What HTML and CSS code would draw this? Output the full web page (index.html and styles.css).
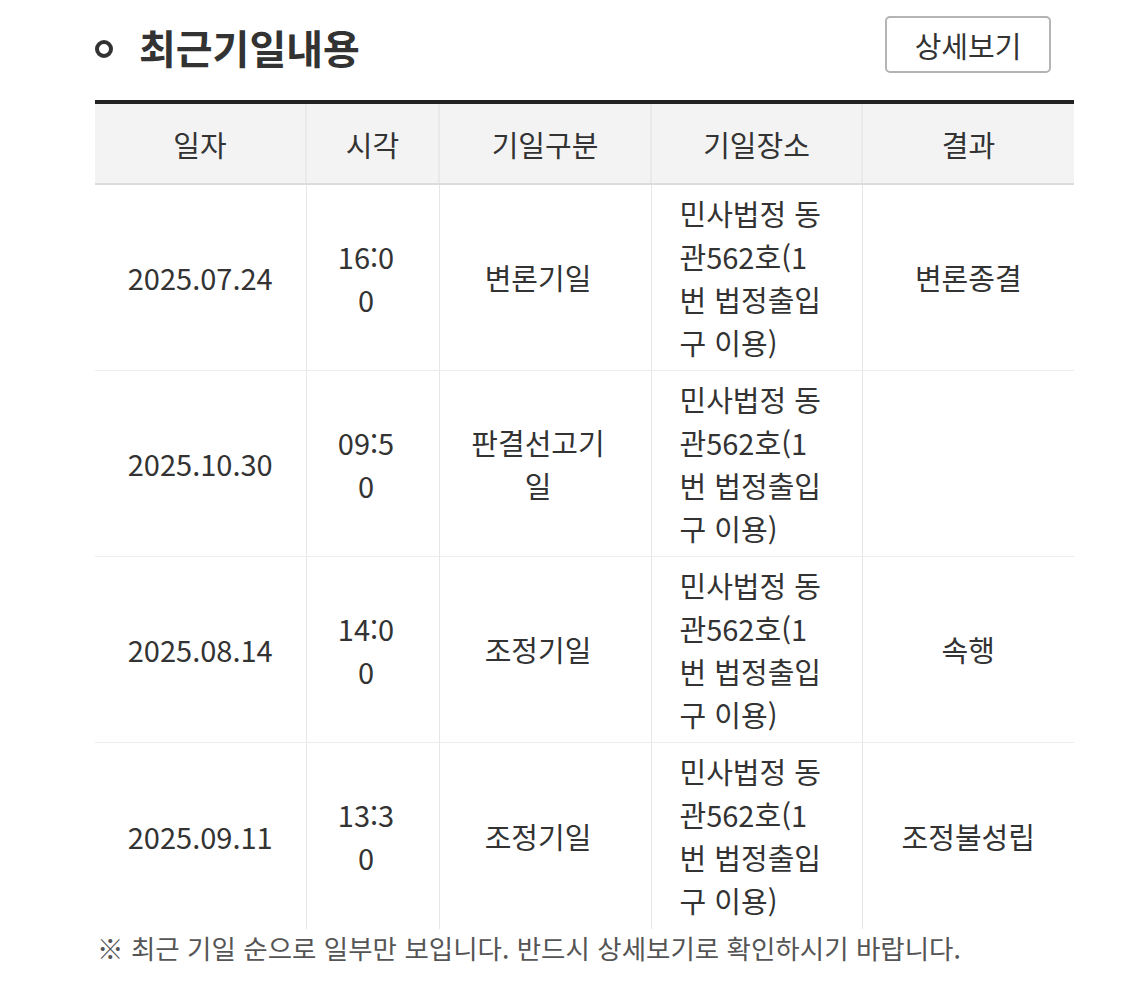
FILE: index.html
```html
<!DOCTYPE html>
<html lang="ko">
<head>
<meta charset="utf-8">
<link rel="stylesheet" href="styles.css">
</head>
<body>
<div class="page">
  <div class="head">
    <h2 class="title"><span class="bullet"></span>최근기일내용</h2>
    <button class="more">상세보기</button>
  </div>
  <table class="dates">
    <colgroup>
      <col class="w1"><col class="w2"><col class="w3"><col class="w4"><col class="w5">
    </colgroup>
    <thead>
      <tr><th>일자</th><th>시각</th><th>기일구분</th><th>기일장소</th><th>결과</th></tr>
    </thead>
    <tbody>
      <tr>
        <td>2025.07.24</td><td class="c2">16:00</td><td class="c3">변론기일</td>
        <td class="c4">민사법정 동관562호(1번 법정출입구 이용)</td><td>변론종결</td>
      </tr>
      <tr>
        <td>2025.10.30</td><td class="c2">09:50</td><td class="c3">판결선고기일</td>
        <td class="c4">민사법정 동관562호(1번 법정출입구 이용)</td><td></td>
      </tr>
      <tr>
        <td>2025.08.14</td><td class="c2">14:00</td><td class="c3">조정기일</td>
        <td class="c4">민사법정 동관562호(1번 법정출입구 이용)</td><td>속행</td>
      </tr>
      <tr>
        <td>2025.09.11</td><td class="c2">13:30</td><td class="c3">조정기일</td>
        <td class="c4">민사법정 동관562호(1번 법정출입구 이용)</td><td>조정불성립</td>
      </tr>
    </tbody>
  </table>
  <p class="note">※ 최근 기일 순으로 일부만 보입니다. 반드시 상세보기로 확인하시기 바랍니다.</p>
</div>
</body>
</html>
```

FILE: styles.css
```css
html, body {
  margin: 0;
  padding: 0;
  background: #fff;
}
body {
  font-family: "Noto Sans CJK KR", "Noto Sans", sans-serif;
  color: #333;
}
.page {
  width: 979px;
  padding-left: 95px;
}
.head {
  height: 100px;
  display: flex;
  align-items: center;
  justify-content: space-between;
  padding-bottom: 6px;
  box-sizing: border-box;
  padding-right: 23px;
}
.title {
  margin: 0;
  display: flex;
  align-items: center;
  font-size: 40px;
  font-weight: 700;
  line-height: 1.3;
  color: #333;
}
.bullet {
  flex: 0 0 auto;
  width: 18px;
  height: 18px;
  border: 4.5px solid #333;
  border-radius: 50%;
  box-sizing: border-box;
  margin: 4px 26px 0 0;
}
.more {
  width: 166px;
  height: 57px;
  border: 2px solid #b4b4b4;
  border-radius: 5px;
  background: #fff;
  font-family: inherit;
  font-size: 29px;
  color: #333;
  padding: 0;
  margin-top: -5px;
}
.dates {
  width: 979px;
  border-collapse: collapse;
  table-layout: fixed;
  border-top: 4px solid #222;
}
.w1 { width: 211px; }
.w2 { width: 133px; }
.w3 { width: 212px; }
.w4 { width: 211px; }
.w5 { width: 212px; }
.dates th {
  height: 79px;
  background: #f3f3f3;
  font-weight: 400;
  font-size: 29px;
  color: #333;
  border-bottom: 2px solid #dcdcdc;
  border-left: 2px solid #e9e9e9;
  padding: 0;
}
.dates th:first-child,
.dates td:first-child { border-left: none; }
.dates td {
  height: 185px;
  padding: 0 30px;
  text-align: center;
  vertical-align: middle;
  font-size: 29px;
  line-height: 43px;
  color: #333;
  border-left: 1px solid #e6e6e6;
  border-bottom: 1px solid #ececec;
  word-break: break-all;
}
.dates tbody tr:last-child td {
  border-bottom: none;
  height: 186px;
}
.dates td.c2 { padding: 0 42px 0 29px; }
.dates td.c3 { padding: 0 33px 0 19px; }
.dates td.c4 {
  text-align: left;
  padding: 0 28px 0 28px;
}
.note {
  margin: 0;
  font-size: 26.5px;
  line-height: 38px;
  color: #555;
  padding-left: 2px;
}
```
